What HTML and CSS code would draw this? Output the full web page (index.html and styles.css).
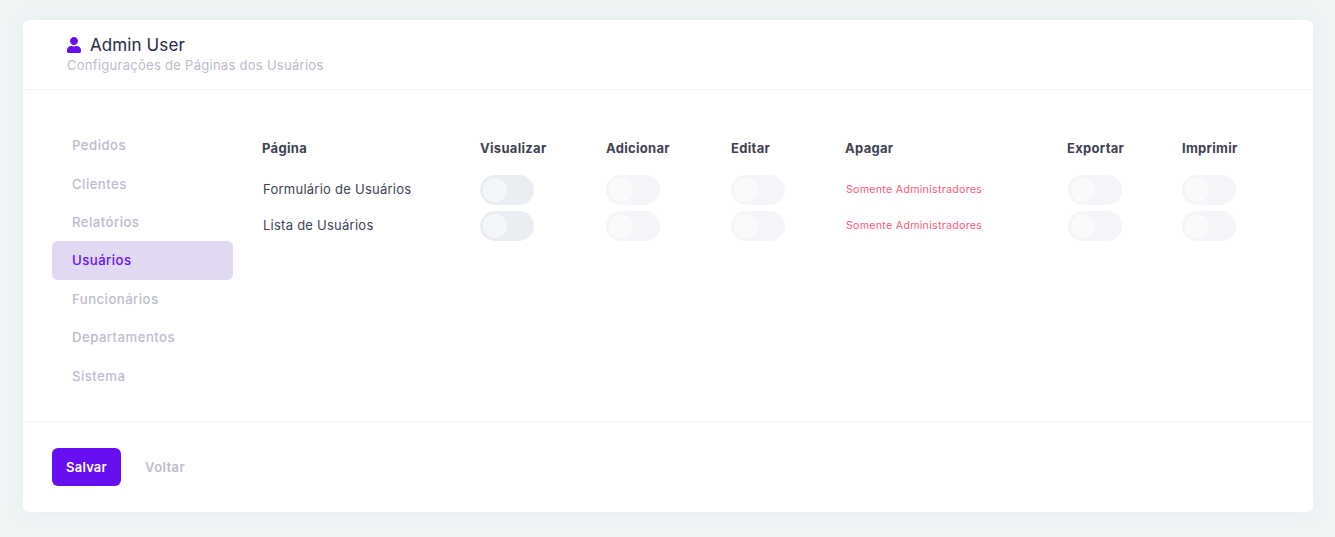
FILE: index.html
```html
<!DOCTYPE html>
<html lang="pt-BR">
<head>
<meta charset="utf-8">
<title>Configurações de Páginas dos Usuários</title>
<link rel="stylesheet" href="styles.css">
</head>
<body>
<main class="card">
  <header class="card-header">
    <h1 class="title">
      <svg class="user-icon" viewBox="0 0 448 512" aria-hidden="true"><path d="M224 256c70.7 0 128-57.3 128-128S294.7 0 224 0 96 57.3 96 128s57.3 128 128 128zm89.6 32h-16.7c-22.2 10.2-46.9 16-72.9 16s-50.6-5.8-72.9-16h-16.7C60.2 288 0 348.2 0 422.4V464c0 26.5 21.5 48 48 48h352c26.5 0 48-21.5 48-48v-41.6c0-74.2-60.2-134.4-134.4-134.4z"/></svg>
      <span>Admin User</span>
    </h1>
    <p class="subtitle">Configurações de Páginas dos Usuários</p>
  </header>
  <section class="card-body">
    <nav class="side">
      <a class="side-item">Pedidos</a>
      <a class="side-item">Clientes</a>
      <a class="side-item">Relatórios</a>
      <a class="side-item active">Usuários</a>
      <a class="side-item">Funcionários</a>
      <a class="side-item">Departamentos</a>
      <a class="side-item">Sistema</a>
    </nav>
    <div class="perms">
      <div class="perm-row head">
        <span>Página</span><span>Visualizar</span><span>Adicionar</span><span>Editar</span><span>Apagar</span><span>Exportar</span><span>Imprimir</span>
      </div>
      <div class="perm-row">
        <span class="page-name">Formulário de Usuários</span>
        <span class="toggle"></span>
        <span class="toggle off"></span>
        <span class="toggle off"></span>
        <span class="admin-only">Somente Administradores</span>
        <span class="toggle off"></span>
        <span class="toggle off"></span>
      </div>
      <div class="perm-row">
        <span class="page-name">Lista de Usuários</span>
        <span class="toggle"></span>
        <span class="toggle off"></span>
        <span class="toggle off"></span>
        <span class="admin-only">Somente Administradores</span>
        <span class="toggle off"></span>
        <span class="toggle off"></span>
      </div>
    </div>
  </section>
  <footer class="card-footer">
    <button class="btn-save" type="button">Salvar</button>
    <button class="btn-back" type="button">Voltar</button>
  </footer>
</main>
</body>
</html>
```
FILE: styles.css
```css
* { box-sizing: border-box; }
html, body { height: 100%; }
body {
  margin: 0;
  padding: 20px 22px 25px 23px;
  background: #eff5f5;
  font-family: "Inter", "Open Sans", "Liberation Sans", sans-serif;
  color: #3f4254;
}
.card {
  background: #fff;
  border-radius: 6px;
  height: 492px;
  box-shadow: 0 0 20px rgba(76, 87, 125, 0.05);
  display: flex;
  flex-direction: column;
}
.card-header {
  height: 70px;
  padding: 15px 44px 0;
  border-bottom: 1px solid #eff2f5;
}
.title {
  margin: 0;
  display: flex;
  align-items: center;
  gap: 9px;
  font-size: 17px;
  line-height: 20px;
  font-weight: 400;
  letter-spacing: 0.1px;
  color: #262a42;
}
.user-icon { width: 14px; height: 16px; fill: #6610f2; }
.subtitle {
  margin: 2px 0 0;
  font-size: 13px;
  line-height: 17px;
  letter-spacing: 0.28px;
  color: #bcbccb;
}
.card-body {
  height: 332px;
  padding: 36px 29px 0;
  display: flex;
  border-bottom: 1px solid #eff2f5;
}
.side { width: 181px; flex: none; display: flex; flex-direction: column; }
.side-item {
  height: 38.4px;
  flex: none;
  padding-left: 20px;
  display: flex;
  align-items: center;
  border-radius: 6px;
  font-size: 13.2px;
  font-weight: 500;
  letter-spacing: 0.45px;
  color: #bcbccb;
}
.side-item.active { background: #e1d8f2; color: #6610f2; }
.perms { margin-left: 29px; padding-top: 7px; flex: 1; }
.perm-row {
  display: grid;
  grid-template-columns: 218px 126px 125px 114px 222px 115px 1fr;
  align-items: center;
  height: 30px;
  margin-bottom: 6px;
}
.perm-row.head {
  height: 30px;
  margin-bottom: 12px;
  font-size: 13px;
  font-weight: 700;
  letter-spacing: 0.3px;
  color: #3f4254;
}
.page-name { padding: 0 0 2px 1px; font-size: 13px; letter-spacing: 0.25px; color: #3f4254; }
.toggle {
  width: 54px;
  height: 30px;
  border-radius: 15px;
  background: #e9ecf1;
  position: relative;
  display: block;
}
.toggle:nth-child(6) { margin-left: 1px; }
.toggle::after {
  content: "";
  position: absolute;
  left: 3px;
  top: 3px;
  width: 24px;
  height: 24px;
  border-radius: 50%;
  background: #f5f6f9;
}
.toggle.off { background: #f3f5f9; }
.toggle.off::after { background: #fafafb; }
.admin-only { padding: 0 0 2px 1px; font-size: 10.6px; letter-spacing: 0.3px; color: #f65a7a; }
.card-footer {
  padding: 26px 29px 0;
  display: flex;
  align-items: flex-start;
  gap: 6px;
}
.btn-save, .btn-back {
  height: 38px;
  border: 0;
  border-radius: 6px;
  font-family: inherit;
  font-size: 13px;
  font-weight: 600;
}
.btn-save { width: 69px; background: #6610f2; color: #fff; letter-spacing: 0.2px; }
.btn-back { width: 76px; background: transparent; color: #bcbccb; letter-spacing: 0.4px; }
```
